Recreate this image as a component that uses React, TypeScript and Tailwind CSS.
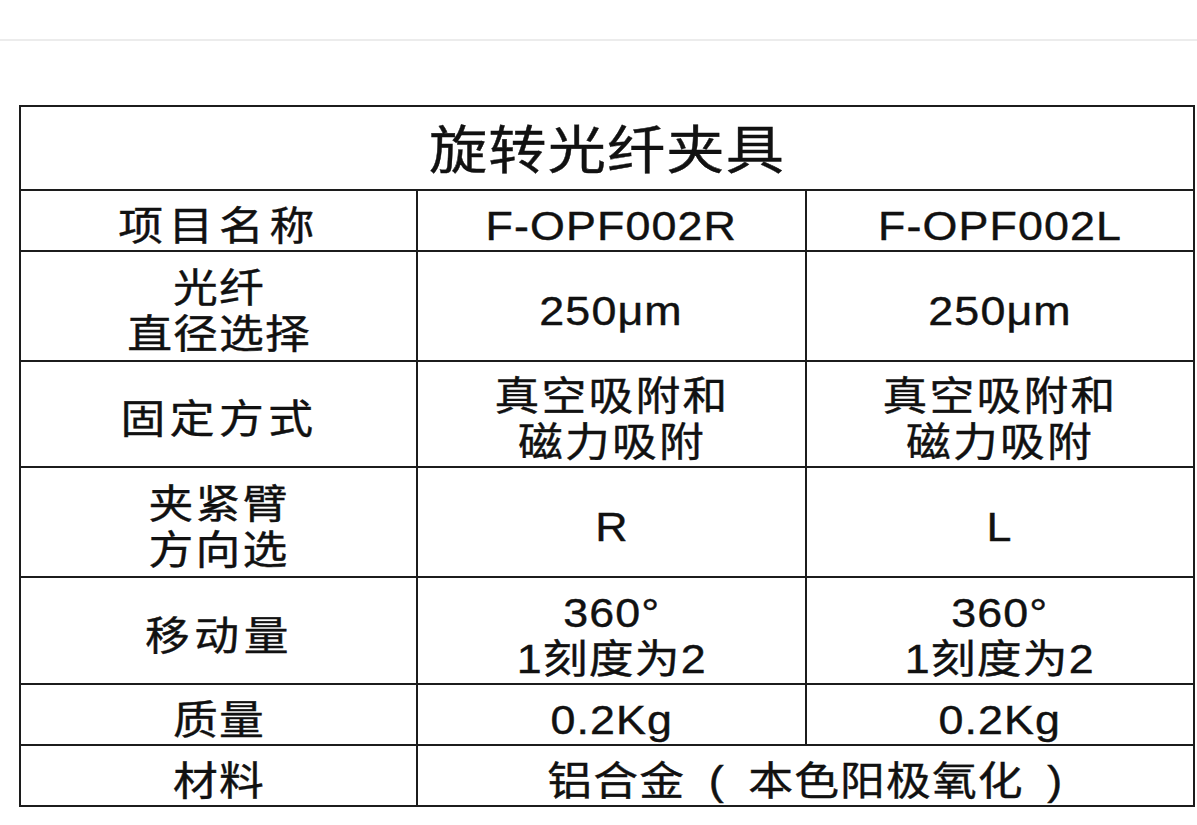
export default function App() {
  const font = { fontFamily: '"Liberation Sans", "Noto Sans CJK SC", sans-serif' };

  const Txt = ({ children }: { children: React.ReactNode }) => (
    <span className="inline-block scale-x-[1.12] translate-y-[5px] tracking-[1px]">{children}</span>
  );

  const cell = "border-2 border-[#1c1c1c] text-center align-middle text-[40px] leading-[46px] text-[#111] p-0";

  return (
    <div className="w-[1197px] h-[825px] bg-white overflow-hidden [-webkit-text-stroke:0.4px_#111]" style={font}>
      <div className="h-[41px] border-b-2 border-[#ececec]" />
      <div className="pl-[19px] pt-[64px]">
        <table className="border-collapse table-fixed w-[1174px]">
          <colgroup>
            <col className="w-[397px]" />
            <col className="w-[389px]" />
            <col className="w-[388px]" />
          </colgroup>
          <tbody>
            <tr className="h-[84px]">
              <td colSpan={3} className={cell + " text-[52px] leading-[60px]"}>
                <span className="inline-block scale-x-[1.12] translate-y-[3px] tracking-[1px]">旋转光纤夹具</span>
              </td>
            </tr>
            <tr className="h-[61px]">
              <td className={cell}><Txt><span className="tracking-[5px]">项目名称</span></Txt></td>
              <td className={cell}><Txt>F-OPF002R</Txt></td>
              <td className={cell}><Txt>F-OPF002L</Txt></td>
            </tr>
            <tr className="h-[110px]">
              <td className={cell}>
                <Txt>光纤<br />直径选择</Txt>
              </td>
              <td className={cell}><Txt>250μm</Txt></td>
              <td className={cell}><Txt>250μm</Txt></td>
            </tr>
            <tr className="h-[106px]">
              <td className={cell}><Txt><span className="tracking-[4px]">固定方式</span></Txt></td>
              <td className={cell}>
                <Txt><span className="tracking-[2px]">真空吸附和<br />磁力吸附</span></Txt>
              </td>
              <td className={cell}>
                <Txt><span className="tracking-[2px]">真空吸附和<br />磁力吸附</span></Txt>
              </td>
            </tr>
            <tr className="h-[110px]">
              <td className={cell}>
                <Txt><span className="tracking-[2px]">夹紧臂<br />方向选</span></Txt>
              </td>
              <td className={cell}><Txt>R</Txt></td>
              <td className={cell}><Txt>L</Txt></td>
            </tr>
            <tr className="h-[107px]">
              <td className={cell}><Txt><span className="tracking-[4px]">移动量</span></Txt></td>
              <td className={cell}>
                <Txt>360°<br />1刻度为2</Txt>
              </td>
              <td className={cell}>
                <Txt>360°<br />1刻度为2</Txt>
              </td>
            </tr>
            <tr className="h-[61px]">
              <td className={cell}><Txt>质量</Txt></td>
              <td className={cell}><Txt>0.2Kg</Txt></td>
              <td className={cell}><Txt>0.2Kg</Txt></td>
            </tr>
            <tr className="h-[61px]">
              <td className={cell}><Txt>材料</Txt></td>
              <td colSpan={2} className={cell}>
                <Txt>
                  <span className="tracking-[1px]">铝合金{"\u2002(\u2002"}本色阳极氧化{"\u2002)"}</span>
                </Txt>
              </td>
            </tr>
          </tbody>
        </table>
      </div>
    </div>
  );
}
